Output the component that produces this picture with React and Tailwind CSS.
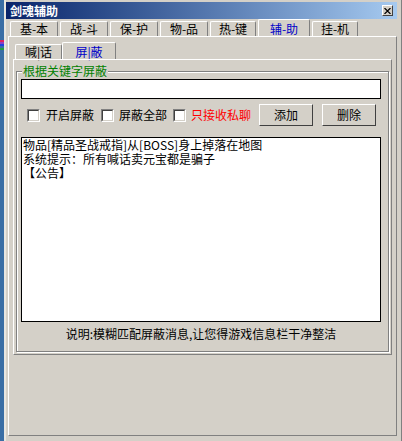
import React from 'react';

const font = { fontFamily: '"Noto Sans CJK SC", "Liberation Sans", sans-serif' };

const raised = 'border-t border-l border-t-white border-l-white border-r border-b border-r-[#404040] border-b-[#404040]';

const Tab = ({ label, active, blue }) => (
  <div
    className={`flex items-center justify-center border-t border-l border-r border-t-white border-l-white border-r-[#808080] rounded-t-[2px] text-[12px] ${
      active ? 'h-[18px] -mb-px z-10 bg-[#d4d0c8] px-[3px]' : 'h-[15px]'
    } ${blue ? 'text-[#0000c8]' : 'text-black'}`}
  >
    {label}
  </div>
);

const Checkbox = () => (
  <div className="w-[13px] h-[13px] bg-white border-t border-l border-t-[#808080] border-l-[#808080] border-r border-b border-r-white border-b-white">
    <div className="w-full h-full border-t border-l border-t-[#404040] border-l-[#404040] border-r border-b border-r-[#d4d0c8] border-b-[#d4d0c8]" />
  </div>
);

const Button = ({ children }) => (
  <div className={`w-[54px] h-[22px] bg-[#d4d0c8] ${raised} flex items-center justify-center text-[12px] text-black`}>
    {children}
  </div>
);

export default function App() {
  const topTabs = ['基-本', '战-斗', '保-护', '物-品', '热-键', '辅-助', '挂-机'];

  return (
    <div className="w-[402px] h-[441px] flex bg-[#d4d0c8] overflow-hidden" style={font}>
      {/* desktop strip */}
      <div className="w-[4px] h-full bg-[#3a6ea5] flex flex-col pt-[40px]">
        <div className="h-[2px] bg-[#e02060]" />
        <div className="h-[2px] bg-[#9040c0]" />
        <div className="h-[2px] bg-[#2040e0]" />
        <div className="h-[2px] bg-[#3a6ea5]" />
        <div className="h-[2px] bg-[#20a040]" />
      </div>
      <div className="flex-1 flex flex-col border-l-2 border-l-[#e8e6e0] border-r border-r-[#808080]">
        {/* title bar */}
        <div className="mt-[2px] mr-[4px] h-[17px] flex items-center justify-between bg-gradient-to-r from-[#0a246a] to-[#a6caf0] pl-[4px] pr-[4px]">
          <span className="text-white font-bold text-[12px] leading-none">剑魂辅助</span>
          <div className={`w-[11px] h-[11px] bg-[#d4d0c8] ${raised} flex items-center justify-center`}>
            <svg width="7" height="6" viewBox="0 0 7 6">
              <path d="M0.5 0L6.5 6M6.5 0L0.5 6" stroke="#000" strokeWidth="1.2" fill="none" />
            </svg>
          </div>
        </div>

        {/* outer tabs */}
        <div className="flex items-end gap-[2px] pl-[4px] mt-[1px] h-[16px]">
          {topTabs.map((t, i) => (
            <div key={t} className={i === 5 ? 'w-[52px]' : i === 4 || i === 6 ? 'w-[46px]' : 'w-[48px]'}>
              <Tab label={t} active={i === 5} blue={i === 5} />
            </div>
          ))}
        </div>

        <div className="ml-[2px] mr-[4px] flex-1 mb-[5px] border-t border-l border-t-white border-l-white border-r border-b border-r-[#808080] border-b-[#808080] pt-[5px] px-[4px] flex flex-col">
          {/* inner tabs */}
          <div className="flex items-end h-[17px] pl-[2px]">
            <div className="w-[47px]">
              <Tab label="喊|话" />
            </div>
            <div className="w-[54px]">
              <Tab label="屏|蔽" active blue />
            </div>
          </div>

          <div className="h-[296px] border-t border-l border-t-white border-l-white border-r border-b border-r-[#808080] border-b-[#808080] px-[2px] pt-[11px]">
            {/* group box */}
            <div className="relative h-[281px] border border-[#808080] shadow-[inset_1px_1px_0_#ffffff,1px_1px_0_#ffffff] pl-[4px] pr-[7px] pt-[7px]">
              <span className="absolute -top-[8px] left-[5px] px-[1px] bg-[#d4d0c8] text-[12px] leading-[14px] text-[#008000]">
                根据关键字屏蔽
              </span>

              <div className="h-[20px] bg-white border border-black" />

              <div className="flex items-center mt-[5px] h-[22px]">
                <div className="ml-[6px]"><Checkbox /></div>
                <span className="ml-[6px] text-[12px] text-black">开启屏蔽</span>
                <div className="ml-[7px]"><Checkbox /></div>
                <span className="ml-[5px] text-[12px] text-black">屏蔽全部</span>
                <div className="ml-[6px]"><Checkbox /></div>
                <span className="ml-[5px] text-[12px] text-[#ff0000]">只接收私聊</span>
                <div className="ml-[8px]"><Button>添加</Button></div>
                <div className="ml-[9px]"><Button>删除</Button></div>
              </div>

              <div className="mt-[11px] h-[185px] bg-white border border-black pl-[1px] text-[12px] leading-[14px] text-black">
                <div>物品[精品圣战戒指]从[BOSS]身上掉落在地图</div>
                <div>系统提示：所有喊话卖元宝都是骗子</div>
                <div>【公告】</div>
              </div>

              <div className="mt-[5px] text-center text-[12px] leading-[14px] text-black">
                说明:模糊匹配屏蔽消息,让您得游戏信息栏干净整洁
              </div>
            </div>
          </div>
        </div>
      </div>
    </div>
  );
}
